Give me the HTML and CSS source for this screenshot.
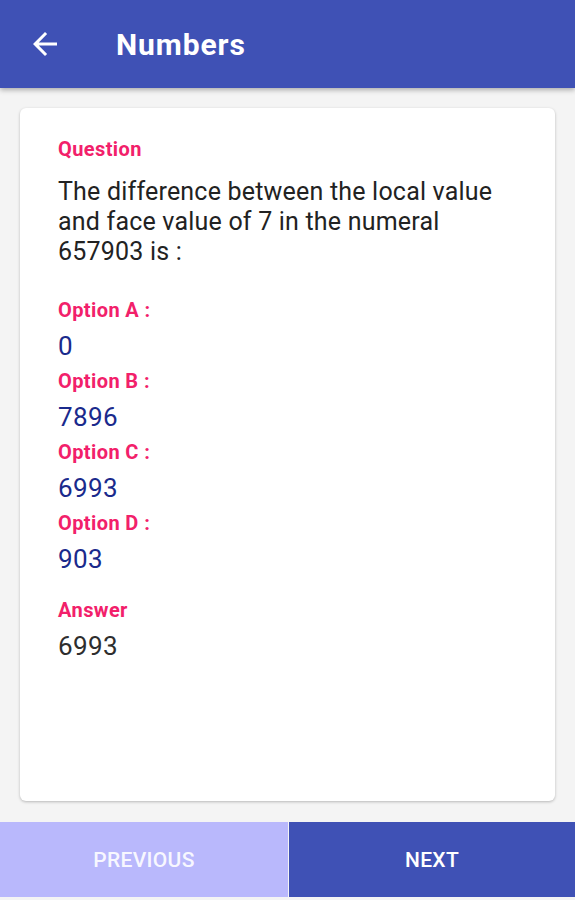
FILE: index.html
```html
<!DOCTYPE html>
<html>
<head>
<meta charset="utf-8">
<link rel="stylesheet" href="styles.css">
</head>
<body>
<div class="app">
  <header class="appbar">
    <svg class="back" viewBox="0 0 24 24" width="36" height="36"><path d="M20 11H7.83l5.59-5.59L12 4l-8 8 8 8 1.41-1.41L7.83 13H20v-2z" fill="#fff"/></svg>
    <div class="title">Numbers</div>
  </header>
  <main class="content">
    <div class="card">
      <div class="label">Question</div>
      <div class="question">The difference between the local value and face value of 7 in the numeral 657903 is :</div>
      <div class="options">
        <div class="label">Option A :</div>
        <div class="value">0</div>
        <div class="label">Option B :</div>
        <div class="value">7896</div>
        <div class="label">Option C :</div>
        <div class="value">6993</div>
        <div class="label">Option D :</div>
        <div class="value">903</div>
      </div>
      <div class="label answer-label">Answer</div>
      <div class="answer">6993</div>
    </div>
  </main>
  <footer class="nav">
    <div class="btn prev">PREVIOUS</div>
    <div class="btn next">NEXT</div>
  </footer>
</div>
</body>
</html>
```
FILE: styles.css
```css
html, body {
  margin: 0;
  padding: 0;
  background: #f4f4f4;
  font-family: Roboto, "Noto Sans", sans-serif;
}
.app {
  width: 575px;
  height: 900px;
  display: flex;
  flex-direction: column;
  background: #f4f4f4;
}
.appbar {
  height: 88px;
  background: #3f51b5;
  display: flex;
  align-items: center;
  box-shadow: 0 2px 5px rgba(0,0,0,0.3);
  position: relative;
  z-index: 1;
  flex: none;
}
.back {
  margin-left: 27px;
  margin-top: -1px;
}
.title {
  margin-left: 53px;
  color: #fff;
  font-size: 30px;
  font-weight: 700;
  letter-spacing: 0.9px;
  margin-top: 0;
}
.content {
  flex: 1;
  padding: 20px 20px 21px 20px;
  display: flex;
}
.card {
  flex: 1;
  background: #fff;
  border-radius: 6px;
  box-shadow: 0 1px 3px rgba(0,0,0,0.25);
  padding: 24px 37px 24px 38px;
}
.label {
  color: #f2206a;
  font-size: 20px;
  font-weight: 700;
  letter-spacing: 0.4px;
  line-height: 35px;
}
.question {
  color: #222;
  font-size: 25px;
  line-height: 30px;
  letter-spacing: 0.2px;
  margin-top: 10px;
  margin-bottom: 26px;
}
.value {
  color: #1a2a8c;
  font-size: 26px;
  letter-spacing: 0.4px;
  line-height: 36px;
}
.answer-label {
  margin-top: 16px;
}
.answer {
  color: #2e2e2e;
  font-size: 26px;
  letter-spacing: 0.4px;
  line-height: 36px;
}
.nav {
  height: 75px;
  display: flex;
  flex: none;
  margin-bottom: 3px;
}
.btn {
  display: flex;
  align-items: center;
  justify-content: center;
  color: #fff;
  font-size: 21px;
  font-weight: 500;
  letter-spacing: 0.3px;
}
.prev {
  width: 288px;
  background: #b9b8fc;
  color: #f7f7ff;
}
.next {
  flex: 1;
  margin-left: 1px;
  background: #3f51b5;
}
```
